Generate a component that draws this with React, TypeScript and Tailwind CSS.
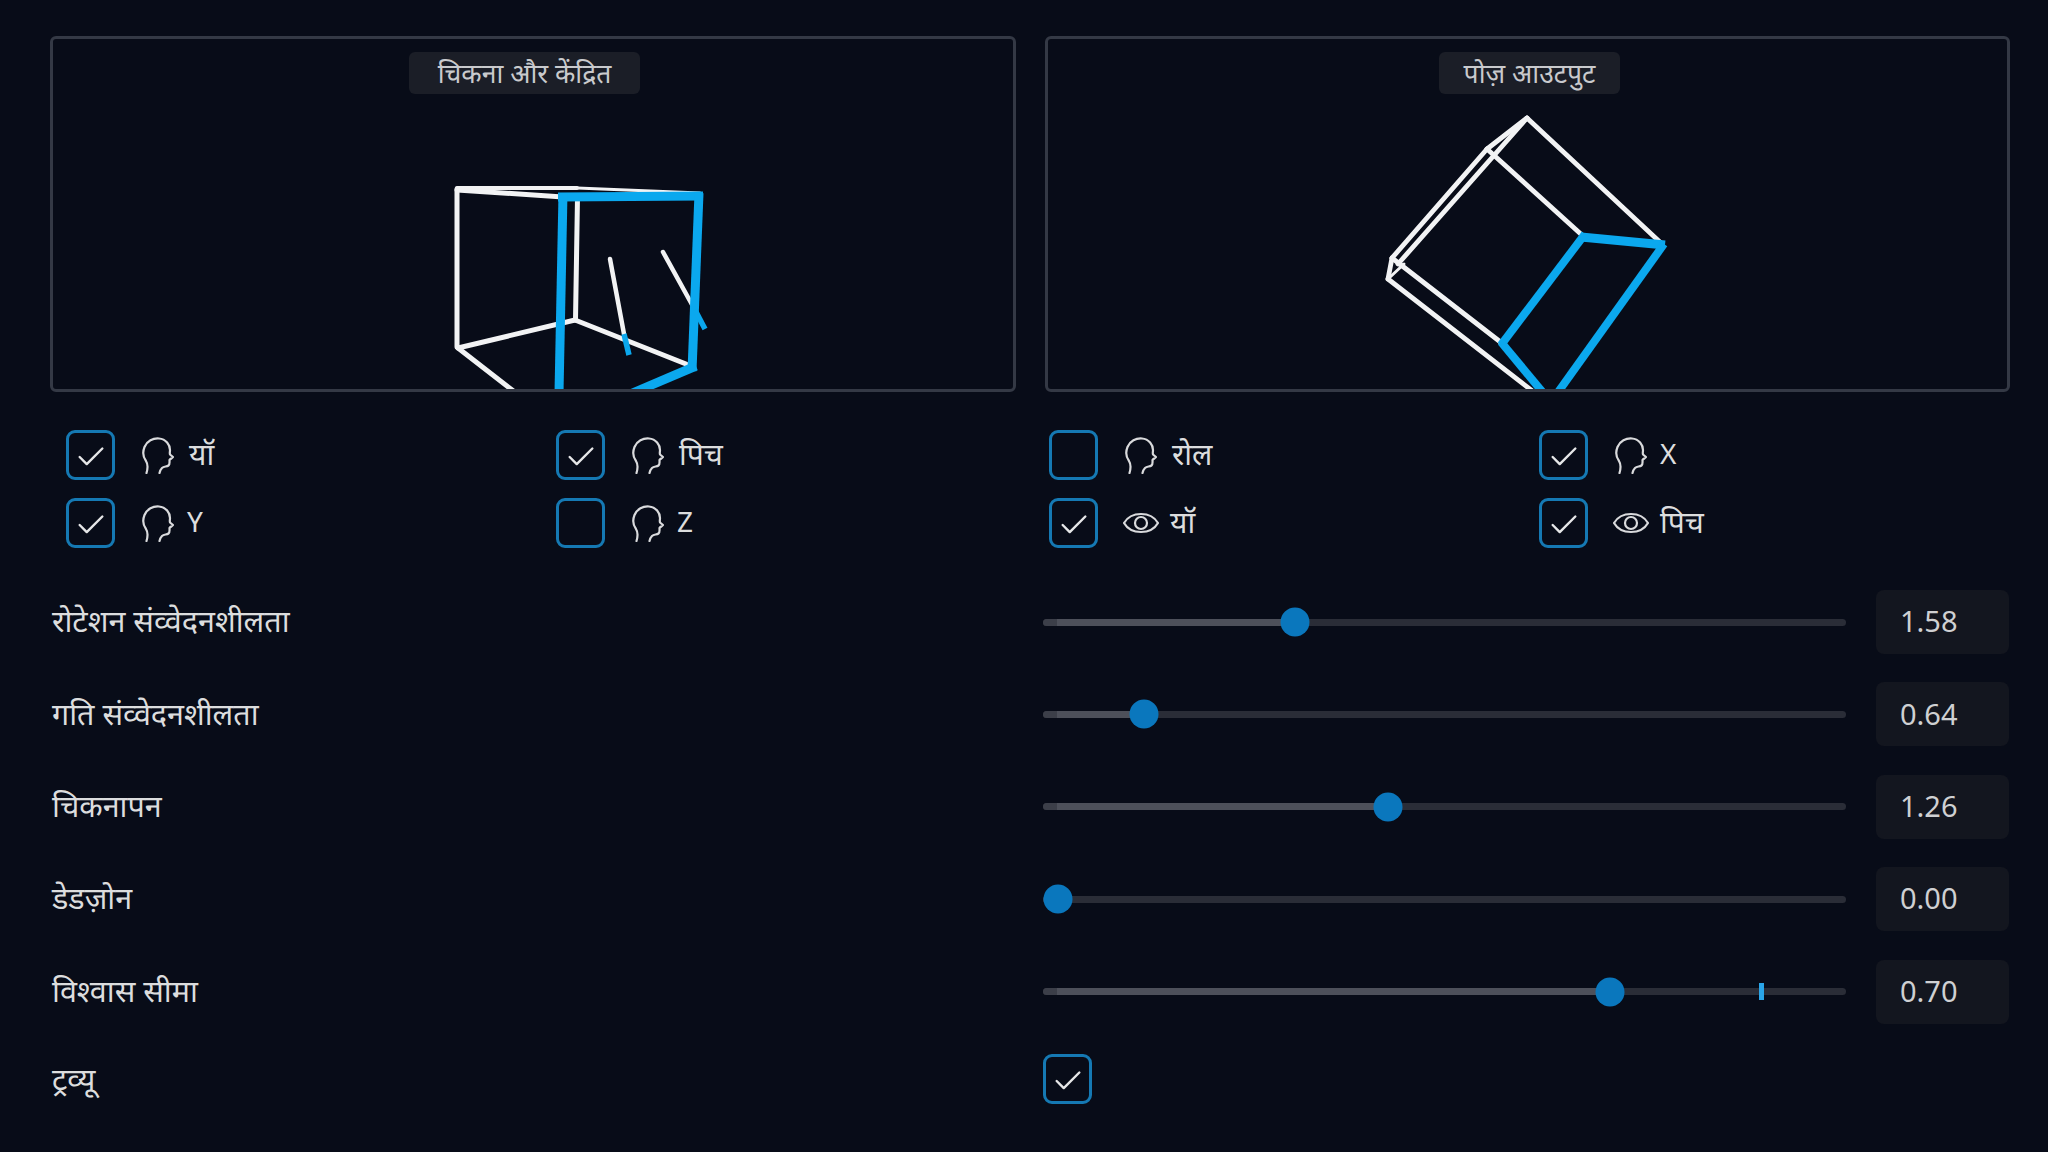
import React from 'react';
import { Check } from 'lucide-react';

type Seg = [number, number, number, number, number?];

const WHITE = '#f2f3f4';
const BLUE = '#0ba8ee';

// segments in page coordinates, the svg viewBox starts at the panel's inner corner
const LEFT_WHITE: Seg[] = [
  [457, 188, 457, 346, 5],
  [457, 189, 563, 196, 5],
  [457, 187, 577, 187, 4],
  [577, 187, 700, 192, 3],
  [577.5, 196, 575.5, 319, 5],
  [458, 347, 575, 319, 5],
  [575, 319, 686, 363, 5],
  [458, 347, 516, 392, 5],
  [610, 258, 624, 333, 4.5],
  [663, 251, 695, 309, 4.5],
];

const LEFT_BLUE: Seg[] = [
  [558, 196, 703, 195, 9],
  [563, 192, 559, 392, 9],
  [699, 192, 692, 370, 9],
  [696, 365, 628, 394, 9],
  [624, 333, 629, 354, 5.5],
  [695, 309, 705, 328, 5.5],
];

const RIGHT_WHITE: Seg[] = [
  [1527, 117, 1662, 243, 4.8],
  [1527, 117, 1487, 148, 4.8],
  [1487, 148, 1392, 257, 4.8],
  [1527, 117, 1398, 263, 4.8],
  [1487, 148, 1583, 235, 4.8],
  [1392, 257, 1388, 278, 4.8],
  [1392, 257, 1503, 343, 4.8],
  [1388, 278, 1535, 392, 4.8],
  [1388, 278, 1404, 263, 3],
];

const RIGHT_BLUE: Seg[] = [
  [1581, 236, 1665, 244, 9],
  [1585, 233, 1501, 344, 8],
  [1501, 341, 1545, 394, 8],
  [1664, 243, 1556, 394, 8],
];

const CHECKS = [
  { icon: 'head', label: 'यॉ', on: true },
  { icon: 'head', label: 'पिच', on: true },
  { icon: 'head', label: 'रोल', on: false },
  { icon: 'head', label: 'X', on: true },
  { icon: 'head', label: 'Y', on: true },
  { icon: 'head', label: 'Z', on: false },
  { icon: 'eye', label: 'यॉ', on: true },
  { icon: 'eye', label: 'पिच', on: true },
];

const SLIDERS: { label: string; value: string; pos: number; marker?: number }[] = [
  { label: 'रोटेशन संव्वेदनशीलता', value: '1.58', pos: 252 },
  { label: 'गति संव्वेदनशीलता', value: '0.64', pos: 101 },
  { label: 'चिकनापन', value: '1.26', pos: 345 },
  { label: 'डेडज़ोन', value: '0.00', pos: 14.5 },
  { label: 'विश्वास सीमा', value: '0.70', pos: 567, marker: 716 },
];

const Lines = ({ segs, color, cap }: { segs: Seg[]; color: string; cap: 'round' | 'butt' }) => (
  <>
    {segs.map(([x1, y1, x2, y2, w], i) => (
      <line key={i} x1={x1} y1={y1} x2={x2} y2={y2} stroke={color} strokeWidth={w} strokeLinecap={cap} />
    ))}
  </>
);

const HeadIcon = () => (
  <svg width="32" height="37" viewBox="0 0 32 37" fill="none" stroke="#d9dadc" strokeWidth="2.2" strokeLinecap="round" strokeLinejoin="round" className="shrink-0">
    <path d="M4.5 36C6 31 6.5 28 4 24C1 20 .5 15 2.5 10C5 4 11 1 17 1.5C24 2 28 8 28 13C28 15 27.5 16 28 17.5L31 20C30.5 21 28 22 27.5 23C27.5 25 28 27 26.5 28.5C24.5 30 22 29 20 31C18.5 32.5 18 34 17.5 36" />
  </svg>
);

const EyeIcon = () => (
  <svg width="36" height="22" viewBox="0 0 36 22" fill="none" stroke="#d9dadc" strokeWidth="2.2" strokeLinejoin="round" className="shrink-0 -ml-[2px]">
    <path d="M1 11C8-1 28-1 35 11C28 23 8 23 1 11Z" />
    <circle cx="18" cy="11" r="6" />
  </svg>
);

const CheckBox = ({ on }: { on: boolean }) => (
  <div className="w-[49px] h-[50px] shrink-0 rounded-[9px] border-[3.5px] border-[#1579b3] flex items-center justify-center">
    {on && <Check size={34} strokeWidth={1.7} className="text-[#e6e7e8] translate-y-[2px]" />}
  </div>
);

const Panel = ({ title, badge, view, children }: { title: string; badge: string; view: string; children: React.ReactNode }) => (
  <div className="relative h-[356px] rounded-[6px] border-[3px] border-[#343945] overflow-hidden">
    <svg viewBox={view} className="block w-full h-full" fill="none">
      {children}
    </svg>
    <div className={`absolute top-[13px] ${badge} h-[42px] pt-[2px] rounded-[6px] bg-[#1b1e27] text-[#c9cacd] text-[26.5px] flex items-center justify-center whitespace-nowrap`}>
      {title}
    </div>
  </div>
);

export default function App() {
  return (
    <div className="w-[2048px] h-[1152px] overflow-hidden bg-[#080c18] pt-[36px] pl-[50px] pr-[38px] font-['Noto_Sans',sans-serif] text-[#dcddde]">
      <div className="grid grid-cols-[966px_965px] gap-x-[29px]">
        <Panel title="चिकना और केंद्रित" badge="left-[356px] w-[231px]" view="53 38 960 350">
          <Lines segs={LEFT_WHITE} color={WHITE} cap="round" />
          <Lines segs={LEFT_BLUE} color={BLUE} cap="butt" />
        </Panel>
        <Panel title="पोज़ आउटपुट" badge="left-[391px] w-[181px]" view="1048 38 959 350">
          <Lines segs={RIGHT_WHITE} color={WHITE} cap="round" />
          <Lines segs={RIGHT_BLUE} color={BLUE} cap="butt" />
        </Panel>
      </div>

      <div className="mt-[38px] pl-[16px] grid grid-cols-[490px_493px_490px_490px] gap-y-[18px]">
        {CHECKS.map((c, i) => {
          const latin = /[A-Z]/.test(c.label);
          return (
            <div key={i} className="flex items-center h-[50px]">
              <CheckBox on={c.on} />
              <div className="w-[63px] pl-[27px] flex items-center">{c.icon === 'head' ? <HeadIcon /> : <EyeIcon />}</div>
              <span className={`${latin ? 'text-[28px] pl-[9px] -translate-y-[2px]' : c.icon === 'eye' ? 'text-[30px] pl-[9px] -translate-y-[1px]' : 'text-[30px] pl-[11px] -translate-y-[1px]'} leading-none`}>{c.label}</span>
            </div>
          );
        })}
      </div>

      <div className="mt-[42px] flex flex-col gap-[28.4px]">
        {SLIDERS.map((s) => (
          <div key={s.label} className="flex items-center h-[64px]">
            <div className="w-[993px] pl-[2px] pb-[2px] text-[30.5px]">{s.label}</div>
            <div className="relative w-[803px] h-[7px] rounded-full bg-[#2a2d37]">
              <div className="absolute left-[14px] top-0 h-full bg-[#4d505a] rounded-r-full" style={{ width: s.pos - 14 }} />
              <div className="absolute left-0 top-0 h-full w-[14px] bg-[#3c3f49] rounded-l-full" />
              <div className="absolute top-1/2 -translate-x-1/2 -translate-y-1/2 w-[29px] h-[29px] rounded-full bg-[#0a77bd]" style={{ left: s.pos }} />
              {s.marker && <div className="absolute top-[-5px] w-[5px] h-[17px] bg-[#2aa5e8]" style={{ left: s.marker }} />}
            </div>
            <div className="ml-[30px] w-[133px] h-[64px] rounded-[8px] bg-[#13161f] flex items-center pl-[24px] pb-[2px] text-[29px] text-[#cfd0d2]">{s.value}</div>
          </div>
        ))}
      </div>

      <div className="mt-[30px] flex items-center h-[50px]">
        <div className="w-[993px] pl-[2px] text-[30.5px]">ट्रव्यू</div>
        <CheckBox on />
      </div>
    </div>
  );
}
